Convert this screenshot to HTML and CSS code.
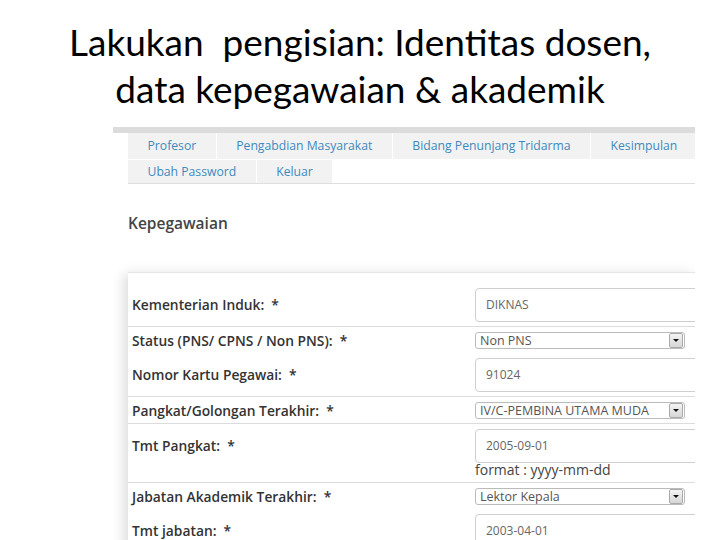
FILE: index.html
```html
<!DOCTYPE html>
<html lang="id">
<head>
    <meta charset="UTF-8">
    <title>Lakukan pengisian</title>
    <link rel="stylesheet" href="styles.css">
</head>
<body>
    <h1 class="title">Lakukan&nbsp; pengisian: Identitas dosen,<br>data kepegawaian &amp; akademik</h1>

    <div class="shot">
        <div class="topbar"></div>
        <div class="tabs">
            <div class="tab-row">
                <span class="tab">Profesor</span>
                <span class="tab">Pengabdian Masyarakat</span>
                <span class="tab">Bidang Penunjang Tridarma</span>
                <span class="tab tab-last">Kesimpulan</span>
            </div>
            <div class="tab-row tab-row2">
                <span class="tab">Ubah Password</span>
                <span class="tab">Keluar</span>
            </div>
        </div>

        <h2 class="section">Kepegawaian</h2>

        <div class="panel">
            <div class="row row-first line">
                <label class="label">Kementerian Induk:&nbsp; *</label>
                <div class="field"><div class="input">DIKNAS</div></div>
            </div>
            <div class="row row-sel">
                <label class="label">Status (PNS/ CPNS / Non PNS):&nbsp; *</label>
                <div class="field"><div class="select">Non PNS<span class="arrow"></span></div></div>
            </div>
            <div class="row line">
                <label class="label">Nomor Kartu Pegawai:&nbsp; *</label>
                <div class="field"><div class="input">91024</div></div>
            </div>
            <div class="row row-sel line">
                <label class="label">Pangkat/Golongan Terakhir:&nbsp; *</label>
                <div class="field"><div class="select">IV/C-PEMBINA UTAMA MUDA<span class="arrow"></span></div></div>
            </div>
            <div class="row line">
                <label class="label">Tmt Pangkat:&nbsp; *</label>
                <div class="field">
                    <div class="input">2005-09-01</div>
                    <div class="hint">format : yyyy-mm-dd</div>
                </div>
            </div>
            <div class="row row-sel">
                <label class="label">Jabatan Akademik Terakhir:&nbsp; *</label>
                <div class="field"><div class="select">Lektor Kepala<span class="arrow"></span></div></div>
            </div>
            <div class="row">
                <label class="label">Tmt jabatan:&nbsp; *</label>
                <div class="field"><div class="input">2003-04-01</div></div>
            </div>
        </div>
    </div>
</body>
</html>
```

FILE: styles.css
```css
body {
    margin: 0;
    width: 720px;
    height: 540px;
    overflow: hidden;
    background: #fff;
}
.title {
    margin: 18px 0 0;
    font-family: Lato, "Open Sans", sans-serif;
    font-weight: normal;
    font-size: 37px;
    line-height: 47px;
    text-align: center;
    color: #000;
    white-space: nowrap;
}
.shot {
    margin: 15px 0 0 113px;
    width: 582px;
    height: 420px;
    overflow: hidden;
    font-family: "Open Sans", sans-serif;
}
.topbar {
    height: 6px;
    background: #dcdcdc;
}
.tabs {
    margin-left: 15px;
    border-bottom: 1px solid #dedede;
}
.tab-row {
    display: flex;
}
.tab {
    padding: 0 19.5px;
    height: 26px;
    line-height: 26px;
    background: #f2f2f2;
    border-right: 1px solid #fff;
    color: #3d8ac0;
    font-size: 12.2px;
    white-space: nowrap;
}
.tab-last {
    flex: 1;
    border-right: 0;
}
.tab-row2 .tab {
    height: 23px;
    line-height: 23px;
    border-top: 1px solid #fff;
}
.section {
    margin: 28px 0 0 15px;
    font-size: 15.5px;
    font-weight: 600;
    color: #444;
}
.panel {
    margin: 38px 0 0 15px;
    background: #fff;
    border-top: 1px solid #e6e6e6;
    box-shadow: -4px 2px 12px rgba(0, 0, 0, 0.14);
}
.row {
    display: flex;
    padding: 5px 0 4px;
}
.row-first {
    padding-top: 15px;
}
.line {
    border-bottom: 1px solid #dcdcdc;
}
.label {
    flex-shrink: 0;
    width: 343px;
    padding-left: 4px;
    font-size: 13.8px;
    font-weight: 600;
    color: #333;
    line-height: 34px;
    white-space: nowrap;
}
.row-sel .label {
    line-height: 17px;
}
.field {
    flex: 1;
    min-width: 0;
}
.input {
    width: 300px;
    height: 32px;
    line-height: 32px;
    padding-left: 10px;
    border: 1px solid #cfcfcf;
    border-radius: 4px;
    font-size: 12px;
    color: #666;
}
.hint {
    margin-top: -1px;
    font-size: 14px;
    color: #444;
    line-height: 16px;
}
.select {
    position: relative;
    width: 204px;
    height: 15px;
    line-height: 15px;
    padding-left: 4px;
    border: 1px solid #bbb;
    border-radius: 3px;
    font-size: 12.5px;
    color: #555;
    white-space: nowrap;
    overflow: hidden;
}
.arrow {
    position: absolute;
    right: 1px;
    top: 0;
    width: 12px;
    height: 13px;
    border: 1px solid #aaa;
    border-radius: 2px;
    background: linear-gradient(#f4f4f4, #d6d6d6);
}
.arrow::after {
    content: "";
    position: absolute;
    left: 3px;
    top: 5px;
    border-left: 3px solid transparent;
    border-right: 3px solid transparent;
    border-top: 3px solid #111;
}
```
